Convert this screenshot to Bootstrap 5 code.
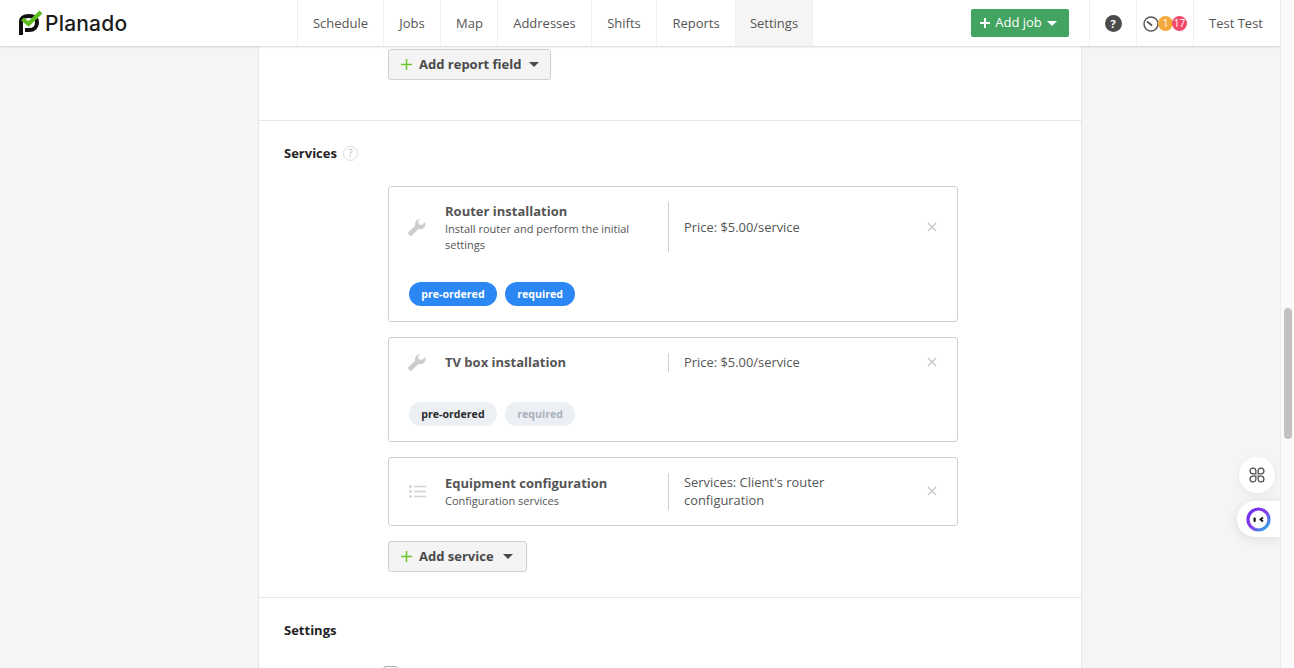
<!DOCTYPE html>
<html lang="en">
<head>
<meta charset="utf-8">
<title>Planado</title>
<link href="https://cdn.jsdelivr.net/npm/bootstrap@5.3.0/dist/css/bootstrap.min.css" rel="stylesheet">
<style>
html,body{height:100%;overflow:hidden}
body{font-family:"Open Sans","Liberation Sans",sans-serif;font-size:13px;color:#555;background:#f5f5f5}
.app-shell{height:668px;overflow:hidden}
.app-main{width:1280px;height:668px;position:relative;overflow:hidden}
.track{width:14px;height:668px;background:#fafafa;border-left:1px solid #ececec;padding:308px 2px 0 3px}
.thumb{height:131px;background:#c2c2c2;border-radius:4px}
.topbar{height:46px;background:#fff;box-shadow:0 1px 2px rgba(0,0,0,.16);position:relative;z-index:2}
.brand-box{width:297px;padding-left:19px;gap:1px}
.brand-name{font-family:"Inter","Lato",sans-serif;font-size:21px;font-weight:500;color:#1c1c1c;letter-spacing:.2px;line-height:1}
.menu-cell{height:46px;display:flex;align-items:center;justify-content:center;border-left:1px solid #f0f0f0;color:#555;text-decoration:none;font-size:13px;padding-top:1px}
.menu-cell.on{background:#f5f5f5}
.w-sched{width:86px}.w-jobs{width:57px}.w-map{width:57px;padding-left:1px}.w-addr{width:94px}.w-shift{width:65px}.w-rep{width:79px}.w-set{width:78px;border-right:1px solid #f0f0f0}
.job-btn{width:98px;height:28px;margin-left:158px;margin-right:20px;background:#43a361;border:0;color:#fff;font-size:13px;border-radius:2px;padding:0 3px 0 0;gap:5px}
.job-btn:hover{background:#43a361;color:#fff}
.w-help{width:47px}.w-stat{width:57px;gap:0}
.w-user{width:87px;padding-right:2px}
.help-dot{width:17px;height:17px;border-radius:50%;background:#4b4b4b;color:#fff;font-size:11px;font-weight:700;line-height:17px;text-align:center}
.count-dot{height:15px;min-width:15px;border-radius:50%;color:#fff;font-size:10px;font-weight:400;line-height:15px;text-align:center}
.count-a{background:#f6a93b;margin-left:-1px}.count-b{background:#f2496c;margin-left:-1px}
.sheet{width:824px;margin-left:258px;background:#fff;border-left:1px solid #e6e6e6;border-right:1px solid #e6e6e6;height:622px}
.top-part{height:75px;padding:3px 0 0 129px;border-bottom:1px solid #e6e6e6}
.svc-part{height:477px;padding:0 0 0 25px;border-bottom:1px solid #e6e6e6}
.set-part{height:70px;padding-left:25px}
.sec-title{font-size:13px;font-weight:700;color:#222;line-height:18px}
.svc-head{height:64px;margin-bottom:1px;gap:6px}
.q-mark{width:15px;height:15px;border-radius:50%;border:1px solid #ddd;color:#bbb;font-size:10px;line-height:13px;text-align:center}
.svc-list{margin-left:104px;width:570px;gap:15px}
.svc-item{border:1px solid #cfcfcf;border-radius:3px;background:#fff;position:relative}
.svc-row{display:flex;align-items:stretch}
.svc-ico{width:56px;padding-left:19px;flex:none;display:flex;align-items:center}
.ico-tv{padding-bottom:2px}
.ico-list{padding-left:20px}
.svc-info{width:223px;flex:none;padding-right:20px}
.info-low{padding-top:1px}
.svc-name{font-size:13px;font-weight:700;color:#555;line-height:18px}
.svc-desc{font-size:11px;color:#555;line-height:16px;margin-top:1px}
.svc-val{flex:none;width:190px;border-left:1px solid #cfcfcf;padding-left:15px;font-size:12.9px;color:#555;line-height:18px;display:flex;align-items:center}
.val-up{padding-bottom:2px}
.svc-x{position:absolute;right:20px;color:#c4c4c4;line-height:1}
.pill-row{display:flex;gap:8px;padding-left:20px}
.pill-tag{height:24px;border-radius:12px;font-size:10.6px;font-weight:700;line-height:24px;padding:0 12.3px}
.pill-blue{background:#2b87f3;color:#fff}
.pill-grey{background:#eceff3;color:#2b2b2b}
.pill-mute{background:#eceff3;color:#a9b1bd}
.add-btn{height:31px;border:1px solid #cfcfcf;border-radius:3px;background:#f4f4f4;color:#4a4a4a;font-size:13px;font-weight:700;padding:0 11px 0 12px;gap:7px;display:inline-flex;align-items:center}
.add-btn:hover{background:#f4f4f4;color:#4a4a4a;border-color:#cfcfcf}
.add-wide{padding-right:13px}
.add-wide .tri{margin-left:2px}
.tri{width:0;height:0;border-left:5px solid transparent;border-right:5px solid transparent;border-top:5px solid #4a4a4a;margin-left:1px}
.tri-w{border-top-color:#fff;margin-left:0}
.chk-box{width:15px;height:15px;border:1px solid #aaa;border-radius:3px;margin:27px 0 0 99px}
.float-a{position:absolute;right:5px;top:457px;width:36px;height:36px;border-radius:50%;background:#fff;box-shadow:0 2px 10px rgba(0,0,0,.06);display:flex;align-items:center;justify-content:center}
.float-b{position:absolute;right:0;top:501px;width:43px;height:36px;border-radius:18px 0 0 18px;background:#fff;box-shadow:0 2px 12px rgba(0,0,0,.1);display:flex;align-items:center;padding-left:9px}
</style>
</head>
<body>
<div class="app-shell d-flex">
<div class="app-main">
  <header class="topbar d-flex align-items-center">
    <div class="brand-box d-flex align-items-center">
      <svg width="25" height="27" viewBox="0 0 25 27"><path d="M2 25V12C2 8 5 6 10 6s8 2 8 6.500S15 20 10 20H6" fill="none" stroke="#111" stroke-width="4"/><path d="M3.500 9l6 5L22 2" fill="none" stroke="#5dbb1f" stroke-width="4.200"/></svg>
      <span class="brand-name">Planado</span>
    </div>
    <nav class="d-flex">
      <a class="menu-cell w-sched" href="#">Schedule</a>
      <a class="menu-cell w-jobs" href="#">Jobs</a>
      <a class="menu-cell w-map" href="#">Map</a>
      <a class="menu-cell w-addr" href="#">Addresses</a>
      <a class="menu-cell w-shift" href="#">Shifts</a>
      <a class="menu-cell w-rep" href="#">Reports</a>
      <a class="menu-cell w-set on" href="#">Settings</a>
    </nav>
    <button class="btn job-btn d-flex align-items-center justify-content-center" type="button">
      <svg width="10" height="10" viewBox="0 0 10 10"><path d="M5 0v10M0 5h10" stroke="#fff" stroke-width="2"/></svg>
      <span>Add job</span><span class="tri tri-w"></span>
    </button>
    <div class="menu-cell w-help"><span class="help-dot">?</span></div>
    <div class="menu-cell w-stat">
      <svg width="16" height="16" viewBox="0 0 16 16"><circle cx="8" cy="8" r="7" fill="#fff" stroke="#555" stroke-width="1.400"/><path d="M4 5.500l5 4" stroke="#555" stroke-width="1.800"/></svg>
      <span class="count-dot count-a">1</span><span class="count-dot count-b">17</span>
    </div>
    <div class="menu-cell w-user">Test Test</div>
  </header>
  <main class="sheet">
    <section class="top-part">
      <button class="btn add-btn" type="button">
        <svg width="11" height="11" viewBox="0 0 11 11"><path d="M5.500 0v11M0 5.500h11" stroke="#6fc62a" stroke-width="1.500"/></svg>
        <span>Add report field</span><span class="tri"></span>
      </button>
    </section>
    <section class="svc-part">
      <div class="svc-head d-flex align-items-center">
        <span class="sec-title">Services</span><span class="q-mark">?</span>
      </div>
      <div class="svc-list d-flex flex-column">
        <article class="svc-item" style="height:136px">
          <div class="svc-row" style="padding-top:15px;height:65px">
            <div class="svc-ico"><svg width="18" height="18" viewBox="0 0 18 18"><path d="M12 1a5 5 0 0 0-4.700 6.500L1 13.500a2.400 2.400 0 0 0 3.400 3.400l6.200-6.100A5 5 0 0 0 17 4l-3 3-3.200-.8L10 3l3-2.200z" fill="#cdcdcd"/></svg></div>
            <div class="svc-info">
              <div class="svc-name">Router installation</div>
              <div class="svc-desc">Install router and perform the initial settings</div>
            </div>
            <div class="svc-val">Price: $5.00/service</div>
            <svg class="svc-x" style="top:35px" width="10" height="10" viewBox="0 0 10 10"><path d="M1 1l8 8M9 1l-8 8" stroke="#c4c4c4" stroke-width="1.200"/></svg>
          </div>
          <div class="pill-row" style="margin-top:30px"><span class="pill-tag pill-blue">pre-ordered</span><span class="pill-tag pill-blue">required</span></div>
        </article>
        <article class="svc-item" style="height:105px">
          <div class="svc-row" style="padding-top:15px;height:34px">
            <div class="svc-ico ico-tv"><svg width="18" height="18" viewBox="0 0 18 18"><path d="M12 1a5 5 0 0 0-4.700 6.500L1 13.500a2.400 2.400 0 0 0 3.400 3.400l6.200-6.100A5 5 0 0 0 17 4l-3 3-3.200-.8L10 3l3-2.200z" fill="#cdcdcd"/></svg></div>
            <div class="svc-info"><div class="svc-name">TV box installation</div></div>
            <div class="svc-val val-up">Price: $5.00/service</div>
            <svg class="svc-x" style="top:19px" width="10" height="10" viewBox="0 0 10 10"><path d="M1 1l8 8M9 1l-8 8" stroke="#c4c4c4" stroke-width="1.200"/></svg>
          </div>
          <div class="pill-row" style="margin-top:30px"><span class="pill-tag pill-grey">pre-ordered</span><span class="pill-tag pill-mute">required</span></div>
        </article>
        <article class="svc-item" style="height:69px">
          <div class="svc-row" style="padding-top:15px;height:52px">
            <div class="svc-ico ico-list"><svg width="17" height="13" viewBox="0 0 17 13"><g fill="#d4d4d4"><circle cx="1.500" cy="1.500" r="1.500"/><circle cx="1.500" cy="6.500" r="1.500"/><circle cx="1.500" cy="11.500" r="1.500"/><rect x="5" y=".7" width="12" height="1.600"/><rect x="5" y="5.700" width="12" height="1.600"/><rect x="5" y="10.700" width="12" height="1.600"/></g></svg></div>
            <div class="svc-info info-low">
              <div class="svc-name">Equipment configuration</div>
              <div class="svc-desc">Configuration services</div>
            </div>
            <div class="svc-val val-up">Services: Client's router configuration</div>
            <svg class="svc-x" style="top:28px" width="10" height="10" viewBox="0 0 10 10"><path d="M1 1l8 8M9 1l-8 8" stroke="#c4c4c4" stroke-width="1.200"/></svg>
          </div>
        </article>
        <div>
          <button class="btn add-btn add-wide" type="button">
            <svg width="11" height="11" viewBox="0 0 11 11"><path d="M5.500 0v11M0 5.500h11" stroke="#6fc62a" stroke-width="1.500"/></svg>
            <span>Add service</span><span class="tri"></span>
          </button>
        </div>
      </div>
    </section>
    <section class="set-part">
      <div class="sec-title" style="padding-top:23px">Settings</div>
      <div class="chk-box"></div>
    </section>
  </main>
  <div class="float-a">
    <svg width="18" height="18" viewBox="0 0 16 16" fill="none" stroke="#4a4a4a" stroke-width="1.100"><path d="M7 7H4a2.600 2.600 0 1 1 3-3zM9 7h3a2.600 2.600 0 1 0-3-3zM7 9H4a2.600 2.600 0 1 0 3 3zM9 9h3a2.600 2.600 0 1 1-3 3z"/></svg>
  </div>
  <div class="float-b">
    <svg width="25" height="25" viewBox="0 0 25 25"><defs><linearGradient id="ringg" x1="0" y1="0" x2="1" y2="1"><stop offset="0" stop-color="#6a2df0"/><stop offset=".5" stop-color="#8a3bea"/><stop offset="1" stop-color="#20b7e8"/></linearGradient></defs><circle cx="12.500" cy="12.500" r="10.500" fill="#fff" stroke="url(#ringg)" stroke-width="3.200"/><rect x="7.500" y="10.500" width="2.200" height="4.500" rx="1" fill="#111"/><path d="M17 10.500l-2.500 2 2.500 2" fill="none" stroke="#111" stroke-width="1.800"/></svg>
  </div>
</div>
<div class="track"><div class="thumb"></div></div>
</div>
</body>
</html>
